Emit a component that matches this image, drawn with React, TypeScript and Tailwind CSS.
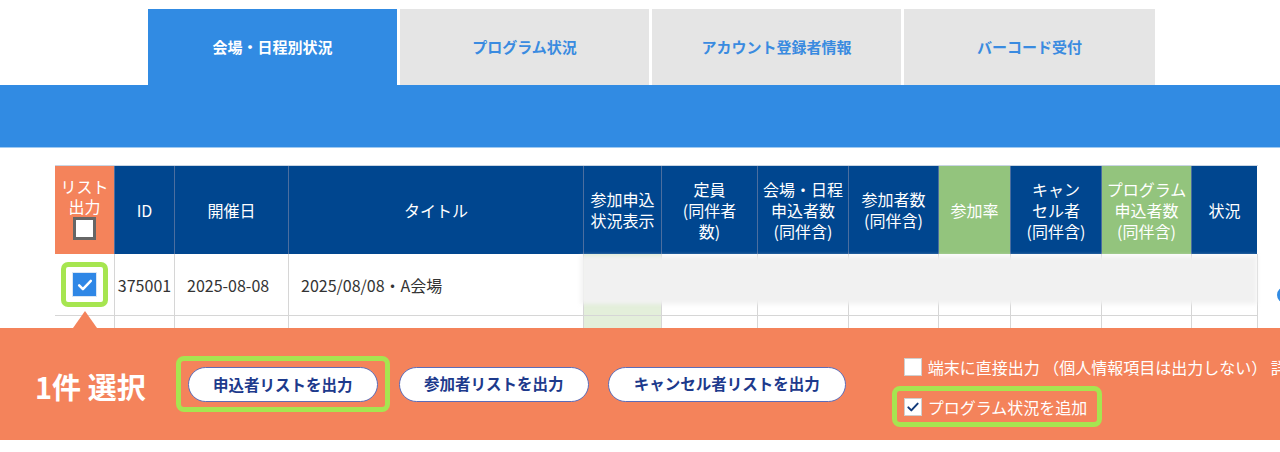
import React from "react";

const headers: { label: React.ReactNode; bg: string }[] = [
  { label: "ID", bg: "bg-[#00468f]" },
  { label: "開催日", bg: "bg-[#00468f]" },
  { label: "タイトル", bg: "bg-[#00468f]" },
  { label: <>参加申込<br />状況表示</>, bg: "bg-[#00468f]" },
  { label: <>定員<br />(同伴者<br />数)</>, bg: "bg-[#00468f]" },
  { label: <>会場・日程<br />申込者数<br />(同伴含)</>, bg: "bg-[#00468f]" },
  { label: <>参加者数<br />(同伴含)</>, bg: "bg-[#00468f]" },
  { label: "参加率", bg: "bg-[#93c47d]" },
  { label: <>キャン<br />セル者<br />(同伴含)</>, bg: "bg-[#00468f]" },
  { label: <>プログラム<br />申込者数<br />(同伴含)</>, bg: "bg-[#93c47d]" },
  { label: "状況", bg: "bg-[#00468f]" },
];

const Check = ({ className }: { className: string }) => (
  <svg viewBox="0 0 24 24" className={className} fill="none" strokeLinecap="round" strokeLinejoin="round">
    <path d="M5 12.5l4.5 4.5L19 7" />
  </svg>
);

export default function App() {
  const grid =
    "grid grid-cols-[59px_60px_114px_295px_78px_96px_91px_90px_72px_91px_90px_66px]";
  return (
    <div className="relative w-[1280px] h-[452px] overflow-hidden bg-white font-['Noto_Sans_CJK_JP',sans-serif]">
      {/* Tabs */}
      <div className="flex gap-[3px] pl-[148px] pt-[9px]">
        <div className="w-[249px] h-[76px] flex items-center justify-center bg-[#318be3] text-white text-[15px] font-bold">
          会場・日程別状況
        </div>
        <div className="w-[249px] h-[76px] flex items-center justify-center bg-[#e5e5e5] text-[#3a8be0] text-[15px] font-bold">
          プログラム状況
        </div>
        <div className="w-[249px] h-[76px] flex items-center justify-center bg-[#e5e5e5] text-[#3a8be0] text-[15px] font-bold">
          アカウント登録者情報
        </div>
        <div className="w-[251px] h-[76px] flex items-center justify-center bg-[#e5e5e5] text-[#3a8be0] text-[15px] font-bold">
          バーコード受付
        </div>
      </div>
      <div className="h-[63px] bg-[#318be3] border-b border-[#9fcaf2]" />

      {/* Table */}
      <div className="ml-[55px] mt-[17px] w-[1203px]">
        <div className={`${grid} border-t border-[#c9d5e3]`}>
          <div className="h-[88px] bg-[#f4835b] flex flex-col items-center pt-[10px] text-white text-[16px] leading-[20px]">
            <span>リスト</span>
            <span>出力</span>
            <span className="mt-[1px] w-[23px] h-[23px] bg-white border-[3px] border-[#666]" />
          </div>
          {headers.map((h, i) => (
            <div
              key={i}
              className={`h-[88px] ${h.bg} border-l border-[#4b6e9f] flex items-center justify-center text-center text-white text-[16px] leading-[21px]`}
            >
              <span>{h.label}</span>
            </div>
          ))}
        </div>
        <div className={`${grid} border-b border-r border-[#d6d6d6] text-[16px] text-[#333]`}>
          <div className="h-[61px] flex items-center justify-center">
            <div className="w-[47px] h-[45px] rounded-[7px] border-[5px] border-[#a6e550] bg-white flex items-center justify-center">
              <div className="w-[25px] h-[25px] bg-[#2f87e6] border border-[#d9e6f5] flex items-center justify-center">
                <Check className="w-[20px] h-[20px] stroke-white stroke-[3]" />
              </div>
            </div>
          </div>
          <div className="h-[61px] border-l border-[#d6d6d6] flex items-center justify-center">375001</div>
          <div className="h-[61px] border-l border-[#d6d6d6] flex items-center pl-[12px]">2025-08-08</div>
          <div className="h-[61px] border-l border-[#d6d6d6] flex items-center pl-[12px]">2025/08/08・A会場</div>
          <div className="h-[61px] border-l border-[#d6d6d6] bg-[#e3efda]" />
          {Array.from({ length: 7 }).map((_, i) => (
            <div key={i} className="h-[61px] border-l border-[#d6d6d6]" />
          ))}
        </div>
        <div className={`${grid} border-r border-[#d6d6d6]`}>
          <div className="h-[40px]" />
          <div className="h-[40px] border-l border-[#d6d6d6]" />
          <div className="h-[40px] border-l border-[#d6d6d6]" />
          <div className="h-[40px] border-l border-[#d6d6d6]" />
          <div className="h-[40px] border-l border-[#d6d6d6] bg-[#e3efda]" />
          {Array.from({ length: 7 }).map((_, i) => (
            <div key={i} className="h-[40px] border-l border-[#d6d6d6]" />
          ))}
        </div>
      </div>

      {/* blurred overlay on row */}
      <div className="absolute left-[581px] top-[256px] w-[676px] h-[48px] bg-[#f1f1f1] blur-[2px]" />
      <div className="absolute left-[1277px] top-[287px] w-[16px] h-[16px] rounded-full border-[3px] border-[#318be3]" />

      {/* Bottom action bar */}
      <div className="absolute left-0 top-[328px] w-[1280px] h-[112px] bg-[#f4835b] flex items-center">
        <div className="absolute left-[73px] top-[-17px] w-0 h-0 border-l-[12px] border-r-[12px] border-b-[17px] border-l-transparent border-r-transparent border-b-[#f4835b]" />
        <div className="shrink-0 ml-[35px] pt-[4px] text-white text-[29px] font-bold leading-none whitespace-nowrap">1件 選択</div>
        <div className="shrink-0 ml-[30px] rounded-[8px] border-[5px] border-[#a6e550] px-[7px] pt-[6px] pb-[5px]">
          <button className="w-[190px] h-[35px] rounded-full bg-white border border-[#5b6cb8] text-[#1d3a8c] text-[15.5px] font-bold">
            申込者リストを出力
          </button>
        </div>
        <button className="shrink-0 ml-[9px] w-[190px] h-[35px] rounded-full bg-white border border-[#5b6cb8] text-[#1d3a8c] text-[15.5px] font-bold">
          参加者リストを出力
        </button>
        <button className="shrink-0 ml-[19px] w-[238px] h-[35px] rounded-full bg-white border border-[#5b6cb8] text-[#1d3a8c] text-[15.5px] font-bold">
          キャンセル者リストを出力
        </button>
        <div className="shrink-0 self-start mt-[28px] ml-[46px] flex flex-col gap-[9px] text-white text-[16px] whitespace-nowrap">
          <div className="h-[21px] flex items-center pl-[12px]">
            <span className="w-[18px] h-[18px] bg-white border border-[#cfcfcf]" />
            <span className="ml-[6px]">端末に直接出力 （個人情報項目は出力しない） 詳細</span>
          </div>
          <div className="w-[210px] rounded-[8px] border-[5px] border-[#a6e550] flex items-center pl-[7px] h-[41px]">
            <span className="w-[18px] h-[18px] bg-white border border-[#cfcfcf] flex items-center justify-center">
              <Check className="w-[16px] h-[16px] stroke-[#123a7a] stroke-[3]" />
            </span>
            <span className="ml-[6px]">プログラム状況を追加</span>
          </div>
        </div>
      </div>
    </div>
  );
}
